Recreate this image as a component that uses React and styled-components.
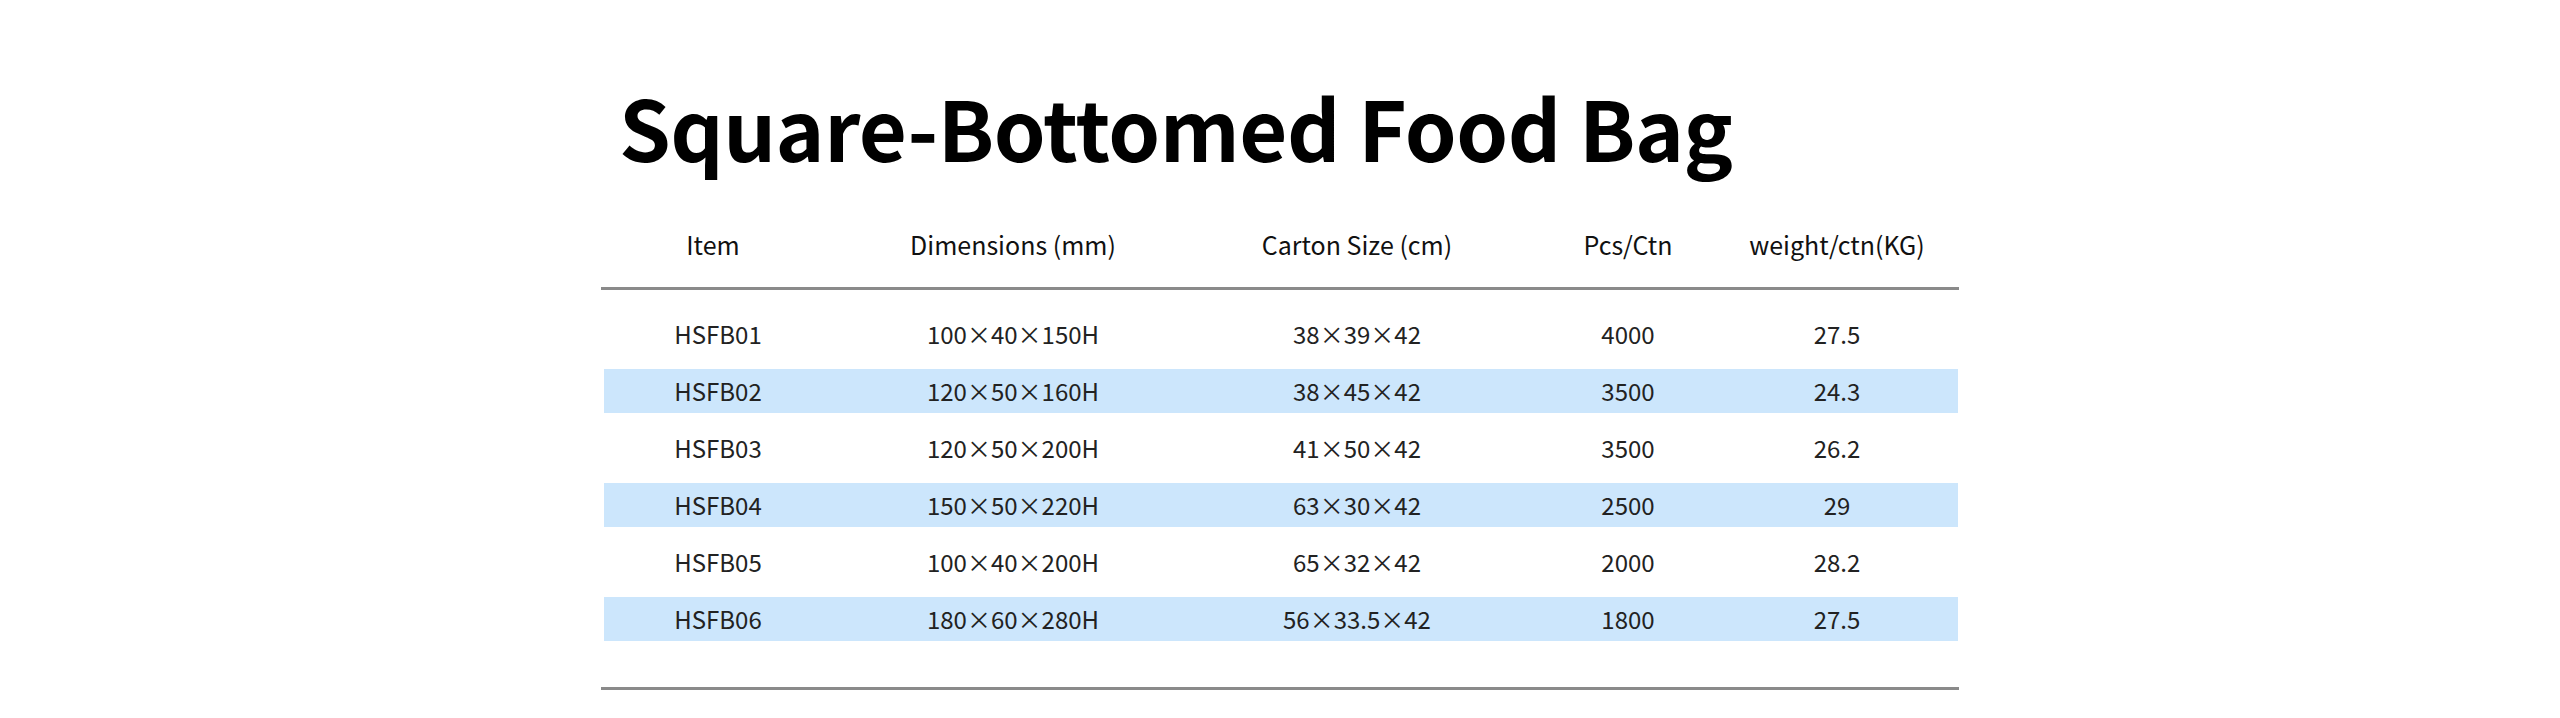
import React from 'react';
import styled, { createGlobalStyle } from 'styled-components';

const GlobalStyle = createGlobalStyle`
  html, body {
    margin: 0;
    padding: 0;
    background: #ffffff;
  }
  body {
    font-family: 'Noto Sans CJK SC', 'Noto Sans', sans-serif;
    color: #1a1a1a;
  }
`;

const COLUMNS = '218px 382px 306px 236px 182px 1fr';

const Page = styled.div`
  width: 1358px;
  margin: 0 auto;
  padding-top: 85px;
`;

const Title = styled.h1`
  margin: 0 0 0 18px;
  font-size: 83px;
  line-height: 83px;
  font-weight: 700;
  color: #000000;
  letter-spacing: -0.5px;
`;

const HeaderRow = styled.div`
  display: grid;
  grid-template-columns: ${COLUMNS};
  margin: 50px 1px 0 3px;
  height: 52px;
  align-items: center;
`;

const Rule = styled.div`
  height: 3px;
  background: #8a8a8a;
  margin-top: ${(props) => props.gap}px;
`;

const Body = styled.div`
  display: flex;
  flex-direction: column;
  gap: 13px;
  margin-top: 22px;
`;

const Row = styled.div`
  display: grid;
  grid-template-columns: ${COLUMNS};
  height: 44px;
  margin: 0 1px 0 3px;
  align-items: center;
  background: ${(props) => (props.striped ? '#cce6fc' : 'transparent')};
`;

const Cell = styled.div`
  text-align: center;
  font-size: ${(props) => (props.head ? 25 : 24)}px;
  line-height: 44px;
  white-space: nowrap;
  padding-left: ${(props) => props.shift || 0}px;
  color: ${(props) => (props.head ? '#111111' : '#222222')};
`;

const headers = ['Item', 'Dimensions (mm)', 'Carton Size (cm)', 'Pcs/Ctn', 'weight/ctn(KG)'];

const rows = [
  ['HSFB01', '100×40×150H', '38×39×42', '4000', '27.5'],
  ['HSFB02', '120×50×160H', '38×45×42', '3500', '24.3'],
  ['HSFB03', '120×50×200H', '41×50×42', '3500', '26.2'],
  ['HSFB04', '150×50×220H', '63×30×42', '2500', '29'],
  ['HSFB05', '100×40×200H', '65×32×42', '2000', '28.2'],
  ['HSFB06', '180×60×280H', '56×33.5×42', '1800', '27.5'],
];

const App = () => {
  return (
    <>
      <GlobalStyle />
      <Page>
        <Title>Square-Bottomed Food Bag</Title>
        <HeaderRow>
          {headers.map((h) => (
            <Cell head key={h}>
              {h}
            </Cell>
          ))}
        </HeaderRow>
        <Rule gap={17} />
        <Body>
          {rows.map((row, index) => (
            <Row key={row[0]} striped={index % 2 === 1}>
              {row.map((value, i) => (
                <Cell key={i} shift={i === 0 ? 10 : 0}>
                  {value}
                </Cell>
              ))}
            </Row>
          ))}
        </Body>
        <Rule gap={46} />
      </Page>
    </>
  );
};

export default App;
